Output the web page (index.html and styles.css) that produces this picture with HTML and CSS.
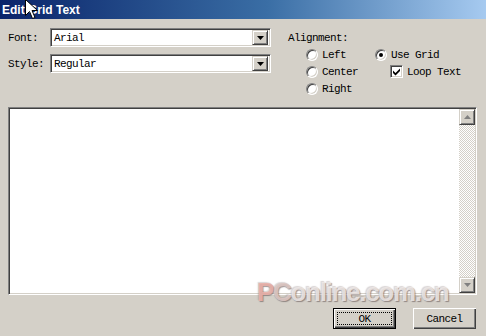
FILE: index.html
```html
<!DOCTYPE html>
<html>
<head>
    <meta charset="utf-8">
    <meta name="viewport" content="width=device-width, initial-scale=1">
    <title>Edit Grid Text</title>
    <link rel="stylesheet" href="styles.css">
</head>
<body>
<div class="window">
    <div class="titlebar"><span class="title">Edit Grid Text</span></div>

    <div class="top">
        <div class="fields">
            <div class="field">
                <span class="label">Font:</span>
                <div class="combo">
                    <span class="combo-text">Arial</span>
                    <span class="drop-btn"><svg width="7" height="4" viewBox="0 0 7 4"><path d="M0 0h7L3.5 4z" fill="#000"/></svg></span>
                </div>
            </div>
            <div class="field">
                <span class="label">Style:</span>
                <div class="combo">
                    <span class="combo-text">Regular</span>
                    <span class="drop-btn"><svg width="7" height="4" viewBox="0 0 7 4"><path d="M0 0h7L3.5 4z" fill="#000"/></svg></span>
                </div>
            </div>
        </div>

        <div class="align">
            <div class="row">Alignment:</div>
            <div class="align-grid">
                <div class="col">
                    <div class="row"><span class="radio"></span>Left</div>
                    <div class="row"><span class="radio"></span>Center</div>
                    <div class="row"><span class="radio"></span>Right</div>
                </div>
                <div class="col">
                    <div class="row"><span class="radio checked"></span>Use Grid</div>
                    <div class="row sub"><span class="check"><svg width="9" height="9" viewBox="0 0 9 9"><path d="M1 3.5l2.5 2.5L8 1.5V4L3.5 8.5 1 6z" fill="#000"/></svg></span>Loop Text</div>
                </div>
            </div>
        </div>
    </div>

    <div class="editor">
        <div class="edit-area"></div>
        <div class="vscroll">
            <span class="sbtn"><svg width="7" height="4" viewBox="0 0 7 4"><path d="M3.5 0L7 4H0z" fill="#808080"/></svg></span>
            <span class="track"></span>
            <span class="sbtn"><svg width="7" height="4" viewBox="0 0 7 4"><path d="M0 0h7L3.5 4z" fill="#808080"/></svg></span>
        </div>
    </div>

    <div class="buttons">
        <button class="btn default"><span class="focus">OK</span></button>
        <button class="btn">Cancel</button>
    </div>

    <!-- watermark and mouse pointer lie over the dialog -->
    <div class="watermark"><span class="wm-p">P</span><span class="wm-c">C</span>online.com.cn</div>
    <svg class="cursor" width="13" height="21" viewBox="0 0 13 21">
        <path d="M0.5 0.5v16l4-4 3 7 2.5-1-3-7h5.5z" fill="#fff" stroke="#000" stroke-width="1"/>
    </svg>
</div>
</body>
</html>
```

FILE: styles.css
```css
body {
    margin: 0;
    background-color: #d4d0c8;
}
.window {
    position: relative;
    width: 486px;
    height: 336px;
    overflow: hidden;
    background-color: #d4d0c8;
    font-family: "Liberation Mono", "DejaVu Sans Mono", monospace;
    font-size: 11px;
    letter-spacing: -0.6px;
    color: #000;
}
.titlebar {
    height: 19px;
    background: linear-gradient(to right, #0a246a 0%, #3a6ea5 55%, #a6caf0 100%);
    display: flex;
    align-items: center;
}
.title {
    padding-left: 2px;
    font-family: "Liberation Sans", Arial, sans-serif;
    font-weight: bold;
    font-size: 12px;
    letter-spacing: 0;
    color: #fff;
}

/* top part: font / style combos and alignment options */
.top {
    display: flex;
    height: 88px;
    padding: 9px 0 0 8px;
    box-sizing: border-box;
}
.fields {
    display: flex;
    flex-direction: column;
    gap: 7px;
}
.field {
    display: flex;
    align-items: center;
}
.label {
    width: 42px;
}
.combo {
    width: 221px;
    height: 19px;
    box-sizing: border-box;
    display: flex;
    align-items: center;
    background: #fff;
    border: 1px solid;
    border-color: #808080 #fff #fff #808080;
    box-shadow: inset 1px 1px #404040, inset -1px -1px #d4d0c8;
    padding: 1px 2px 1px 3px;
}
.combo-text {
    flex: 1;
}
.drop-btn {
    width: 16px;
    height: 15px;
    box-sizing: border-box;
    display: flex;
    align-items: center;
    justify-content: center;
    background: #d4d0c8;
    border: 1px solid;
    border-color: #d4d0c8 #404040 #404040 #d4d0c8;
    box-shadow: inset 1px 1px #fff, inset -1px -1px #808080;
}
.align {
    margin-left: 17px;
    padding-top: 1px;
}
.row {
    height: 17px;
    display: flex;
    align-items: center;
}
.align-grid {
    display: grid;
    grid-template-columns: 69px auto;
    margin-left: 18px;
}
.radio {
    width: 12px;
    height: 12px;
    box-sizing: border-box;
    border-radius: 50%;
    border: 1px solid;
    border-color: #808080 #fff #fff #808080;
    box-shadow: inset 1px 1px #404040, inset -1px -1px #d4d0c8;
    background: #fff;
    margin-right: 4px;
    position: relative;
}
.radio.checked::after {
    content: "";
    position: absolute;
    left: 3px;
    top: 3px;
    width: 4px;
    height: 4px;
    border-radius: 50%;
    background: #000;
}
.row.sub {
    margin-left: 15px;
}
.check {
    width: 13px;
    height: 13px;
    box-sizing: border-box;
    display: flex;
    align-items: center;
    justify-content: center;
    border: 1px solid;
    border-color: #808080 #fff #fff #808080;
    box-shadow: inset 1px 1px #404040, inset -1px -1px #d4d0c8;
    background: #fff;
    margin-right: 4px;
}

/* text box with vertical scrollbar */
.editor {
    display: flex;
    height: 188px;
    margin: 0 9px 0 8px;
    box-sizing: border-box;
    border: 1px solid;
    border-color: #808080 #fff #fff #808080;
    box-shadow: inset 1px 1px #404040, inset -1px -1px #d4d0c8;
    padding: 1px;
    background: #fff;
}
.edit-area {
    flex: 1;
}
.vscroll {
    width: 16px;
    display: flex;
    flex-direction: column;
}
.sbtn {
    width: 16px;
    height: 16px;
    box-sizing: border-box;
    display: flex;
    align-items: center;
    justify-content: center;
    background: #d4d0c8;
    border: 1px solid;
    border-color: #d4d0c8 #404040 #404040 #d4d0c8;
    box-shadow: inset 1px 1px #fff, inset -1px -1px #808080;
}
.track {
    flex: 1;
    background: repeating-conic-gradient(#fff 0 25%, #d4d0c8 0 50%) 0 0 / 2px 2px;
}

.buttons {
    display: flex;
    justify-content: flex-end;
    gap: 17px;
    margin-top: 13px;
    padding-right: 10px;
}
.btn {
    width: 63px;
    height: 21px;
    padding: 0;
    background: #d4d0c8;
    border: none;
    box-shadow: inset 1px 1px #fff, inset -1px -1px #404040, inset -2px -2px #808080;
    font-family: "Liberation Mono", "DejaVu Sans Mono", monospace;
    font-size: 11px;
    letter-spacing: -0.6px;
    color: #000;
}
.btn.default {
    border: 1px solid #000;
    display: flex;
    padding: 3px;
}
.focus {
    flex: 1;
    display: flex;
    align-items: center;
    justify-content: center;
    border: 1px dotted #000;
}

.watermark {
    position: absolute;
    left: 257px;
    top: 277px;
    font-family: "Liberation Sans", Arial, sans-serif;
    font-weight: bold;
    font-size: 26px;
    letter-spacing: -1.3px;
    color: rgba(240, 234, 232, 0.85);
    text-shadow: 1px 1px 1px rgba(100, 85, 85, 0.6), -1px -1px 1px rgba(150, 135, 135, 0.35);
}
.wm-p {
    color: rgba(236, 178, 170, 0.9);
}
.wm-c {
    color: rgba(222, 200, 196, 0.9);
}
.cursor {
    position: absolute;
    left: 25px;
    top: -1px;
}
```
